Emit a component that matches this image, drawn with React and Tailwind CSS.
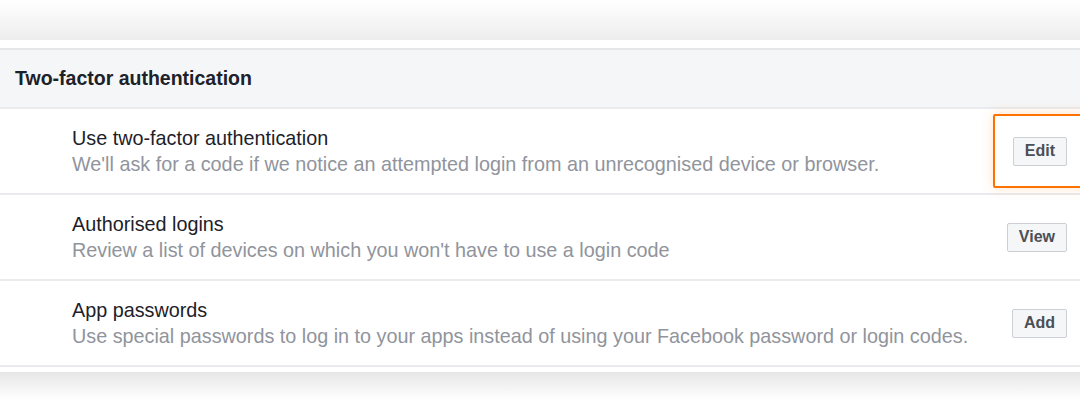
import React from 'react';

const rows = [
  {
    title: 'Use two-factor authentication',
    desc: "We'll ask for a code if we notice an attempted login from an unrecognised device or browser.",
    action: 'Edit',
    highlight: true,
  },
  {
    title: 'Authorised logins',
    desc: "Review a list of devices on which you won't have to use a login code",
    action: 'View',
  },
  {
    title: 'App passwords',
    desc: 'Use special passwords to log in to your apps instead of using your Facebook password or login codes.',
    action: 'Add',
  },
];

function SettingRow({ title, desc, action, highlight }) {
  return (
    <div className="relative flex items-center h-[86px] border-b-2 border-[#e9ebee] pl-[72px] pr-[13px]">
      <div className="flex-1 flex flex-col">
        <span className="text-[19.8px] leading-[26px] text-[#1d2129]">{title}</span>
        <span className="text-[19.8px] leading-[26px] text-[#90949c]">{desc}</span>
      </div>
      <button className="h-[29px] px-[11px] bg-[#f5f6f7] border border-[#ccd0d5] rounded-[2px] text-[16px] font-bold text-[#4b4f56]">
        {action}
      </button>

      {/* highlight box over the action */}
      {highlight && (
        <div className="absolute left-[993px] top-[5px] w-[100px] h-[74px] border-2 border-[#ff7200] rounded-[2px] shadow-[0_0_12px_rgba(255,140,40,0.25)]" />
      )}
    </div>
  );
}

export default function App() {
  return (
    <div className="w-[1080px] h-[415px] bg-white overflow-hidden font-['Liberation_Sans',Arial,sans-serif]">
      {/* shadow of the panel above */}
      <div className="h-[40px] bg-gradient-to-b from-white to-[#ededed]" />
      <div className="h-[8px] bg-white" />

      <div className="border-t-2 border-[#e5e6e9]">
        <div className="h-[59px] flex items-center px-[15px] bg-[#f5f6f7] border-b-2 border-[#e9ebee]">
          <h2 className="text-[19.5px] font-bold text-[#1d2129]">Two-factor authentication</h2>
        </div>

        {rows.map((r) => (
          <SettingRow key={r.title} {...r} />
        ))}
      </div>

      <div className="h-[5px] bg-white" />
      <div className="h-[28px] bg-gradient-to-b from-[#e6e6e6] to-white" />
    </div>
  );
}
